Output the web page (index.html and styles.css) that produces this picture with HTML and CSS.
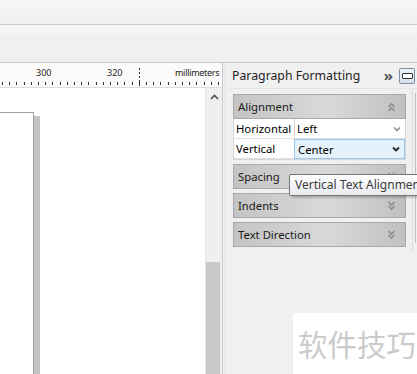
FILE: index.html
```html
<!DOCTYPE html>
<html lang="en">
<head>
    <meta charset="UTF-8">
    <title>Paragraph Formatting</title>
    <link rel="stylesheet" href="styles.css">
</head>
<body>
    <div class="menubar"></div>
    <div class="toolbar"></div>
    <div class="main">
        <div class="workspace">
            <div class="ruler">
                <span class="ruler-label l300">300</span>
                <span class="ruler-label l320">320</span>
                <span class="ruler-label unit">millimeters</span>
                <div class="ticks"></div>
                <div class="marker"></div>
            </div>
            <div class="canvas-row">
                <div class="canvas">
                    <div class="page"></div>
                </div>
                <div class="vscroll">
                    <div class="arrow-up">
                        <svg width="9" height="6" viewBox="0 0 9 6"><path d="M1 5 L4.5 1.5 L8 5" fill="none" stroke="#555" stroke-width="1.6"/></svg>
                    </div>
                    <div class="track"></div>
                    <div class="thumb"></div>
                </div>
            </div>
        </div>
        <div class="panel">
            <div class="panel-head">
                <span class="panel-title">Paragraph Formatting</span>
                <span class="more">&raquo;</span>
                <span class="minbtn"><span></span></span>
            </div>
            <div class="panel-body">
                <div class="group">
                    <div class="section-head">
                        <span>Alignment</span>
                        <svg class="chev" width="9" height="10" viewBox="0 0 9 10"><path d="M1.5 5 L4.5 2 L7.5 5 M1.5 9 L4.5 6 L7.5 9" fill="none" stroke="#8c8c8c" stroke-width="1.6"/></svg>
                    </div>
                    <div class="prop-grid">
                        <div class="prop-label">Horizontal</div>
                        <div class="prop-value">Left
                            <svg width="8" height="6" viewBox="0 0 8 6"><path d="M1 1.5 L4 4.5 L7 1.5" fill="none" stroke="#8a8a8a" stroke-width="1.5"/></svg>
                        </div>
                        <div class="prop-label">Vertical</div>
                        <div class="prop-value active">Center
                            <svg width="8" height="6" viewBox="0 0 8 6"><path d="M1 1.5 L4 4.5 L7 1.5" fill="none" stroke="#222" stroke-width="1.8"/></svg>
                        </div>
                    </div>
                    <div class="section-head">
                        <span>Spacing</span>
                        <svg class="chev" width="9" height="10" viewBox="0 0 9 10"><path d="M1.5 1 L4.5 4 L7.5 1 M1.5 5 L4.5 8 L7.5 5" fill="none" stroke="#8c8c8c" stroke-width="1.6"/></svg>
                    </div>
                    <div class="section-head">
                        <span>Indents</span>
                        <svg class="chev" width="9" height="10" viewBox="0 0 9 10"><path d="M1.5 1 L4.5 4 L7.5 1 M1.5 5 L4.5 8 L7.5 5" fill="none" stroke="#8c8c8c" stroke-width="1.6"/></svg>
                    </div>
                    <div class="section-head">
                        <span>Text Direction</span>
                        <svg class="chev" width="9" height="10" viewBox="0 0 9 10"><path d="M1.5 1 L4.5 4 L7.5 1 M1.5 5 L4.5 8 L7.5 5" fill="none" stroke="#8c8c8c" stroke-width="1.6"/></svg>
                    </div>
                </div>
                <div class="edge"></div>
            </div>
            <div class="tooltip">Vertical Text Alignment</div>
            <div class="watermark">软件技巧</div>
        </div>
    </div>
</body>
</html>
```
FILE: styles.css
```css
html, body {
    margin: 0;
    padding: 0;
    width: 417px;
    height: 374px;
    overflow: hidden;
    background: #f0f0f0;
    font-family: "Noto Sans", "DejaVu Sans", sans-serif;
}
.menubar {
    height: 24px;
    background: linear-gradient(#f7f7f7, #efefef);
    border-bottom: 1px solid #c9c9c9;
}
.toolbar {
    height: 37px;
    background: linear-gradient(#f9f9f9 0%, #f0f0f0 30%, #efefef);
    border-bottom: 1px solid #c9c9c9;
}
.main {
    display: flex;
    height: 311px;
}
.workspace {
    width: 222px;
    border-right: 1px solid #c9c9c9;
    display: flex;
    flex-direction: column;
}
.ruler {
    position: relative;
    height: 24px;
    background: #fbfbfb;
    border-bottom: 1px solid #dcdcdc;
    font-size: 9px;
    color: #222;
}
.ruler-label {
    position: absolute;
    top: 3px;
}
.l300 { left: 36px; }
.l320 { left: 107px; }
.unit { left: 175px; letter-spacing: -0.3px; }
.ticks {
    position: absolute;
    left: 0;
    right: 0;
    bottom: 2px;
    height: 3px;
    background: repeating-linear-gradient(90deg, transparent 0 2px, #333 2px 3px, transparent 3px 7.2px);
}
.marker {
    position: absolute;
    left: 139px;
    top: 5px;
    bottom: 0;
    width: 1px;
    background: repeating-linear-gradient(#333 0 2px, transparent 2px 4px);
}
.canvas-row {
    flex: 1;
    display: flex;
}
.canvas {
    flex: 1;
    background: #fff;
    position: relative;
}
.page {
    position: absolute;
    left: -1px;
    top: 24px;
    width: 33px;
    bottom: -1px;
    background: #fff;
    border: 1px solid #a0a0a0;
    box-shadow: 6px 4px 0 #c4c4c4;
}
.vscroll {
    width: 16px;
    background: #efefef;
    display: flex;
    flex-direction: column;
    border-left: 1px solid #e6e6e6;
}
.arrow-up {
    height: 18px;
    display: flex;
    justify-content: center;
    align-items: center;
}
.track {
    height: 156px;
}
.thumb {
    flex: 1;
    margin-right: 2px;
    background: #c8c8c8;
}
.panel {
    position: relative;
    flex: 1;
    border-left: 1px solid #e2e2e2;
    margin-left: 2px;
}
.panel-head {
    height: 25px;
    display: flex;
    align-items: center;
    padding-left: 6px;
    font-size: 12.3px;
    color: #1e1e1e;
}
.panel-title {
    flex: 1;
    margin-top: -1px;
}
.more {
    font-size: 15px;
    font-weight: bold;
    color: #555;
    margin-right: 6px;
    margin-top: -2px;
}
.minbtn {
    width: 14px;
    height: 14px;
    border: 1px solid #7c8fa6;
    border-radius: 2px;
    background: linear-gradient(#eef3f8, #d6e0ea);
    margin-right: 2px;
    display: flex;
    align-items: center;
    justify-content: center;
}
.minbtn span {
    width: 9px;
    height: 4px;
    border: 1px solid #333;
    border-radius: 1px;
    background: #fff;
}
.panel-body {
    display: flex;
    border-top: 1px solid #e4e4e4;
    margin-left: 2px;
}
.group {
    width: 173px;
    padding: 5px 6px 6px 5px;
    border-right: 1px solid #dedede;
    display: flex;
    flex-direction: column;
    gap: 4px;
}
.edge {
    width: 1px;
    margin-left: 2px;
    background: #bdbdbd;
    margin-top: 4px;
    height: 150px;
}
.section-head {
    height: 23px;
    border: 1px solid #a9a9a9;
    background: linear-gradient(90deg, #c4c4c4 0%, #d9d9d9 55%, #c0c0c0 100%);
    display: flex;
    align-items: center;
    justify-content: space-between;
    padding: 0 9px 0 4px;
    font-size: 11.3px;
    color: #1a1a1a;
}
.chev {
    display: block;
}
.prop-grid {
    display: grid;
    grid-template-columns: 61px 1fr;
    margin-top: -4px;
    background: #fff;
    border: 1px solid #d5d5d5;
    border-top: none;
    font-size: 11.3px;
}
.prop-label {
    height: 19px;
    line-height: 19px;
    padding-left: 2px;
    border-right: 1px solid #d5d5d5;
    border-bottom: 1px solid #e0e0e0;
}
.prop-value {
    height: 19px;
    display: flex;
    align-items: center;
    justify-content: space-between;
    padding: 0 4px 0 2px;
    border-bottom: 1px solid #e0e0e0;
}
.prop-value.active {
    background: #e5f1fb;
    border: 1px solid #99c6ee;
    height: 18px;
    margin-left: -1px;
    padding-left: 3px;
}
.tooltip {
    position: absolute;
    left: 63px;
    top: 111px;
    height: 20px;
    line-height: 20px;
    padding: 0 5px;
    white-space: nowrap;
    font-size: 12px;
    color: #3c3c3c;
    background: linear-gradient(#ffffff, #e9eaf0);
    border: 1px solid #767676;
    border-radius: 2px;
    box-shadow: 2px 2px 2px rgba(0,0,0,0.2);
}
.watermark {
    position: absolute;
    left: 67px;
    top: 250px;
    width: 140px;
    height: 62px;
    background: #fff;
    font-family: "Noto Sans CJK SC", sans-serif;
    font-size: 29.5px;
    color: #cbcbcb;
    line-height: 60px;
    padding-left: 5px;
    white-space: nowrap;
}
```
